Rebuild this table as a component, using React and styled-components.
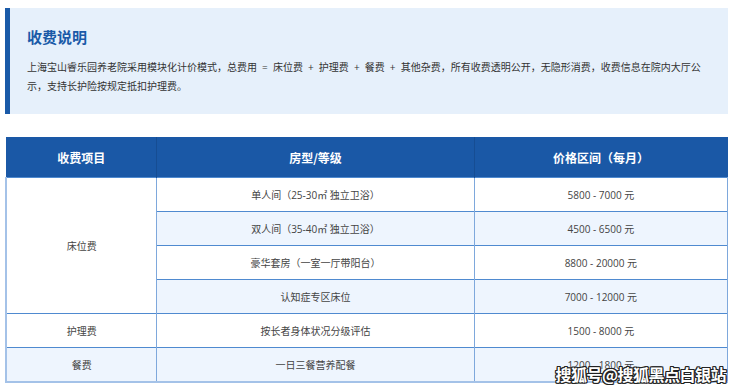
import React from 'react';
import styled, { createGlobalStyle } from 'styled-components';

const GlobalStyle = createGlobalStyle`
  html, body {
    margin: 0;
    padding: 0;
    background: #ffffff;
  }
  body {
    font-family: "Open Sans", "Noto Sans CJK SC", "Noto Sans", sans-serif;
    color: #333;
  }
`;

const rows = [
  { item: '床位费', span: 4, room: '单人间（25-30㎡ 独立卫浴）', price: '5800 - 7000 元' },
  { room: '双人间（35-40㎡ 独立卫浴）', price: '4500 - 6500 元' },
  { room: '豪华套房（一室一厅带阳台）', price: '8800 - 20000 元' },
  { room: '认知症专区床位', price: '7000 - 12000 元' },
  { item: '护理费', span: 1, room: '按长者身体状况分级评估', price: '1500 - 8000 元' },
  { item: '餐费', span: 1, room: '一日三餐营养配餐', price: '1200 - 1800 元' },
];

export default function App() {
  return (
    <>
      <GlobalStyle />
      <Page>
        <InfoBox>
          <Title>收费说明</Title>
          <Desc>
            {'上海宝山睿乐园养老院采用模块化计价模式，总费用 = 床位费 + 护理费 + 餐费 + 其他杂费，所有收费透明公开，无隐形消费，收费信息在院内大厅公'}
            <br />
            {'示，支持长护险按规定抵扣护理费。'}
          </Desc>
        </InfoBox>
        <Table>
          <colgroup>
            <col style={{ width: '20.9%' }} />
            <col style={{ width: '44%' }} />
            <col style={{ width: '35.1%' }} />
          </colgroup>
          <thead>
            <tr>
              <Th>收费项目</Th>
              <Th>房型/等级</Th>
              <Th>价格区间（每月）</Th>
            </tr>
          </thead>
          <tbody>
            {rows.map((r, i) => (
              <tr key={i}>
                {r.item && (
                  <Td rowSpan={r.span} $alt={r.span === 1 && i % 2 === 1} $first>
                    {r.item}
                  </Td>
                )}
                <Td $alt={i % 2 === 1}>{r.room}</Td>
                <Td $alt={i % 2 === 1} $last>{r.price}</Td>
              </tr>
            ))}
          </tbody>
        </Table>
        <Watermark>搜狐号@搜狐黑点白银站</Watermark>
      </Page>
    </>
  );
}

const Page = styled.div`
  position: relative;
  width: 740px;
  height: 391px;
  box-sizing: border-box;
  padding: 8px 12px 0 5px;
  overflow: hidden;
`;

const InfoBox = styled.section`
  background: #e6f0fb;
  border-left: 5px solid #1a5aa8;
  padding: 18px 20px 17px 17px;
  box-sizing: border-box;
  height: 106px;
`;

const Title = styled.h2`
  margin: 0;
  font-size: 15px;
  line-height: 22px;
  font-weight: 700;
  color: #1a5aa8;
  font-family: "Noto Sans CJK SC", sans-serif;
`;

const Desc = styled.p`
  margin: 10px 0 0;
  font-size: 10px;
  line-height: 19px;
  word-spacing: 2.5px;
  color: #333;
`;

const Table = styled.table`
  margin-top: 23px;
  width: 723px;
  border-collapse: collapse;
  table-layout: fixed;
  border-bottom: 2px solid #a4c2e8;
`;

const Th = styled.th`
  background: #1a58a6;
  color: #ffffff;
  font-size: 12px;
  font-weight: 700;
  height: 40px;
  padding: 0;
  text-align: center;
  font-family: "Noto Sans CJK SC", sans-serif;
  border-left: 1px solid #164d93;

  &:first-child {
    border-left: none;
  }
`;

const Td = styled.td`
  height: 33px;
  padding: 0;
  text-align: center;
  font-size: 10px;
  color: #444;
  background: ${p => (p.$alt ? '#eef5fe' : '#ffffff')};
  border-top: 1px solid #4f8ad0;
  border-left: ${p => (p.$first ? '2px solid #a4c2e8' : '1px solid #7ea8dc')};
  border-right: ${p => (p.$last ? '1px solid #7ea8dc' : 'none')};
`;

const Watermark = styled.div`
  position: absolute;
  right: 14px;
  bottom: 5px;
  font-size: 16px;
  font-weight: 700;
  letter-spacing: -0.5px;
  color: #ffffff;
  font-family: "Noto Sans CJK SC", sans-serif;
  text-shadow:
    -1px -1px 0 #222, 1px -1px 0 #222, -1px 1px 0 #222, 1px 1px 0 #222,
    0 -1px 0 #222, 0 1px 0 #222, -1px 0 0 #222, 1px 0 0 #222;
`;
